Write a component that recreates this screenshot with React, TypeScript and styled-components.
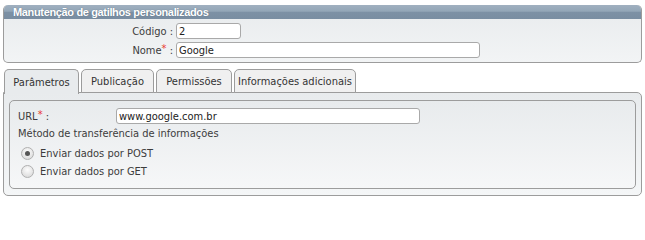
import { FC, useState } from 'react';
import styled, { createGlobalStyle } from 'styled-components';

const GlobalStyle = createGlobalStyle`
  html, body {
    margin: 0;
    background: #fff;
  }
  body {
    font-family: "DejaVu Sans Condensed", "DejaVu Sans", Tahoma, sans-serif;
    font-size: 11px;
    color: #3c3c3c;
  }
`;

const Page = styled.div`
  width: 639px;
  padding: 5px 3px 0;
`;

const Panel = styled.section`
  border: 1px solid #9c9c9c;
  border-top: none;
  border-radius: 5px;
  overflow: hidden;
  background: linear-gradient(#e8ebed, #f2f4f5);
`;

const PanelTitle = styled.div`
  height: 14px;
  margin: 0 -1px;
  padding-left: 10px;
  border-radius: 5px 5px 0 0;
  background: linear-gradient(#a0b0c0, #93a6b7 45%, #7d91a5 50%, #798da1);
  color: #fff;
  font-family: "Liberation Sans", Arial, sans-serif;
  font-weight: bold;
  font-size: 11px;
  letter-spacing: -0.35px;
  line-height: 14px;
  text-shadow: 0 0 1px rgba(40, 60, 80, 0.5);
`;

const FormGrid = styled.div`
  display: grid;
  grid-template-columns: 169px 1fr;
  column-gap: 3px;
  row-gap: 3px;
  padding: 4px 0 4px;
  align-items: center;
`;

const Label = styled.label<{ $align?: 'left' | 'right' }>`
  text-align: ${(p) => p.$align ?? 'right'};
  white-space: nowrap;
`;

const Req = styled.span`
  color: #e8372f;
  position: relative;
  top: -2px;
`;

const TextInput = styled.input<{ $width: number }>`
  box-sizing: border-box;
  width: ${(p) => p.$width}px;
  height: 16px;
  padding: 0 2px;
  border: 1px solid #a9a9a9;
  border-radius: 3px;
  background: #fff;
  font: inherit;
  color: #222;
  outline: none;
`;

const Tabs = styled.div`
  margin-top: 6px;
`;

const TabList = styled.div`
  display: flex;
  gap: 2px;
  padding-left: 1px;
  height: 24px;
  position: relative;
  z-index: 1;
`;

const Tab = styled.button<{ $active?: boolean; $width: number }>`
  box-sizing: border-box;
  width: ${(p) => p.$width}px;
  height: ${(p) => (p.$active ? 25 : 24)}px;
  padding: 0;
  border: 1px solid #9c9c9c;
  border-bottom: ${(p) => (p.$active ? 'none' : '1px solid #9c9c9c')};
  border-radius: 5px 5px 0 0;
  background: ${(p) => (p.$active ? '#e8ebed' : '#f0f0f0')};
  font: inherit;
  color: #333;
  cursor: pointer;
  line-height: 21px;
  white-space: nowrap;
`;

const TabBody = styled.div`
  margin-top: -1px;
  border: 1px solid #9c9c9c;
  border-radius: 0 5px 5px 5px;
  background: linear-gradient(#e8ebed, #f4f6f7);
  padding: 7px 5px 6px;
`;

const Box = styled.div`
  border: 1px solid #9c9c9c;
  border-radius: 5px;
  background: linear-gradient(#e8ebed, #f6f7f8);
  padding: 7px 8px 10px;
`;

const UrlRow = styled.div`
  display: grid;
  grid-template-columns: 98px 1fr;
  align-items: center;
`;

const Caption = styled.div`
  margin-top: 2px;
  line-height: 16px;
`;

const RadioList = styled.div`
  display: flex;
  flex-direction: column;
  gap: 4px;
  margin-top: 4px;
  padding-left: 3px;
`;

const RadioLabel = styled.label`
  display: flex;
  align-items: center;
  gap: 6px;
  height: 14px;
  cursor: pointer;
`;

const RadioDot = styled.span<{ $checked?: boolean }>`
  box-sizing: border-box;
  width: 13px;
  height: 13px;
  border-radius: 50%;
  border: 1px solid #b0b0b0;
  background: radial-gradient(circle at 50% 35%, #fdfdfd, #d4d4d4);
  display: flex;
  align-items: center;
  justify-content: center;
  &::after {
    content: '';
    display: ${(p) => (p.$checked ? 'block' : 'none')};
    width: 5px;
    height: 5px;
    border-radius: 50%;
    background: #555;
  }
`;

const tabs = [
  { key: 'param', label: 'Parâmetros', width: 75 },
  { key: 'pub', label: 'Publicação', width: 73 },
  { key: 'perm', label: 'Permissões', width: 76 },
  { key: 'info', label: 'Informações adicionais', width: 122 },
];

const App: FC = () => {
  const [tab, setTab] = useState('param');
  const [method, setMethod] = useState<'POST' | 'GET'>('POST');

  return (
    <Page>
      <GlobalStyle />
      <Panel>
        <PanelTitle>Manutenção de gatilhos personalizados</PanelTitle>
        <FormGrid>
          <Label>Código :</Label>
          <TextInput $width={65} defaultValue="2" />
          <Label>Nome<Req>*</Req> :</Label>
          <TextInput $width={304} defaultValue="Google" />
        </FormGrid>
      </Panel>

      <Tabs>
        <TabList>
          {tabs.map((t) => (
            <Tab key={t.key} $active={tab === t.key} $width={t.width} onClick={() => setTab(t.key)}>
              {t.label}
            </Tab>
          ))}
        </TabList>
        <TabBody>
          <Box>
            <UrlRow>
              <Label $align="left">URL<Req>*</Req> :</Label>
              <TextInput $width={304} defaultValue="www.google.com.br" />
            </UrlRow>
            <Caption>Método de transferência de informações</Caption>
            <RadioList>
              {(['POST', 'GET'] as const).map((m) => (
                <RadioLabel key={m} onClick={() => setMethod(m)}>
                  <RadioDot $checked={method === m} />
                  Enviar dados por {m}
                </RadioLabel>
              ))}
            </RadioList>
          </Box>
        </TabBody>
      </Tabs>
    </Page>
  );
};

export default App;
